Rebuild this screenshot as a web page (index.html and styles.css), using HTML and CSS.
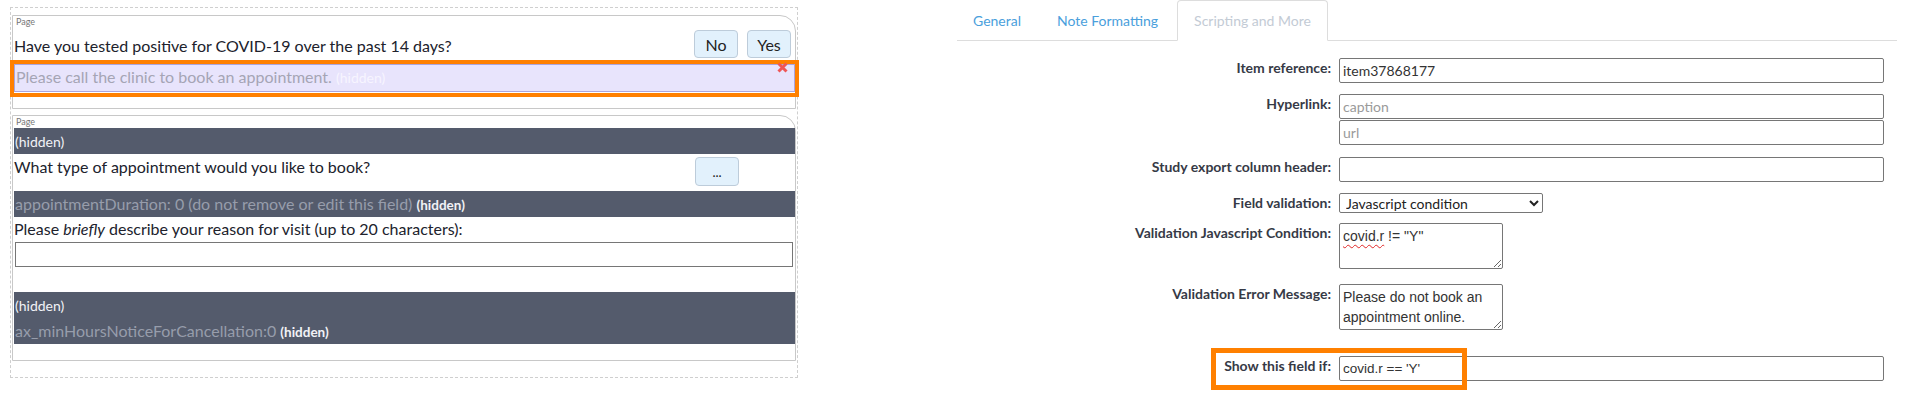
FILE: index.html
```html
<!DOCTYPE html>
<html lang="en">
<head>
<meta charset="utf-8">
<title>Item properties</title>
<link rel="stylesheet" href="styles.css">
</head>
<body>
<div class="designer">
  <div class="page page-1">
    <div class="page-label">Page</div>
    <div class="qrow">
      <div class="qtext q1">Have you tested positive for COVID-19 over the past 14 days?</div>
      <div class="choices">
        <button class="choice" type="button">No</button>
        <button class="choice" type="button">Yes</button>
      </div>
    </div>
    <div class="note-row">
      <span class="note-text">Please call the clinic to book an appointment.</span> <span class="note-hidden">(hidden)</span>
      <span class="sel-frame"></span>
      <svg class="del-x" width="11" height="11" viewBox="0 0 11 11"><path d="M1.5 1.5 L9.5 9.5 M9.5 1.5 L1.5 9.5" stroke="#ef5656" stroke-width="3" stroke-linecap="butt"/></svg>
    </div>
  </div>
  <div class="page page-2">
    <div class="page-label">Page</div>
    <div class="hidden-bar"><span class="tag-plain">(hidden)</span></div>
    <div class="qrow2">
      <div class="qtext">What type of appointment would you like to book?</div>
      <button class="choice more" type="button">...</button>
    </div>
    <div class="hidden-bar"><span class="var">appointmentDuration: 0 (do not remove or edit this field)</span> <span class="tag-bold">(hidden)</span></div>
    <div class="qtext q3">Please <em>briefly</em> describe your reason for visit (up to 20 characters):</div>
    <input class="answer" type="text">
    <div class="hidden-bar tall">
      <div class="bar-line"><span class="tag-plain">(hidden)</span></div>
      <div class="bar-line"><span class="var">ax_minHoursNoticeForCancellation:0</span> <span class="tag-bold">(hidden)</span></div>
    </div>
  </div>
</div>

<div class="props">
  <ul class="tabs">
    <li class="tab">General</li>
    <li class="tab">Note Formatting</li>
    <li class="tab active">Scripting and More</li>
  </ul>
  <div class="form">
    <div class="frow">
      <label class="flabel">Item reference:</label>
      <input class="finput" type="text" value="item37868177">
    </div>
    <div class="frow mt11">
      <label class="flabel">Hyperlink:</label>
      <div class="fstack">
        <input class="finput" type="text" placeholder="caption">
        <input class="finput url" type="text" placeholder="url">
      </div>
    </div>
    <div class="frow mt12">
      <label class="flabel">Study export column header:</label>
      <input class="finput" type="text">
    </div>
    <div class="frow mt11">
      <label class="flabel">Field validation:</label>
      <select class="fselect"><option>Javascript condition</option></select>
    </div>
    <div class="frow mt10">
      <label class="flabel">Validation Javascript Condition:</label>
      <div class="farea"><span class="misspelled">covid.r</span> != "Y"</div>
    </div>
    <div class="frow mt15">
      <label class="flabel">Validation Error Message:</label>
      <div class="farea">Please do not book an appointment online.</div>
    </div>
    <div class="frow mt26">
      <label class="flabel">Show this field if:</label>
      <input class="finput show" type="text" value="covid.r == 'Y'">
      <span class="show-frame"></span>
    </div>
  </div>
</div>
</body>
</html>
```

FILE: styles.css
```css
* {
  box-sizing: border-box;
}

html {
  background: #fff;
}

body {
  margin: 0;
  min-height: 412px;
  display: flex;
  align-items: flex-start;
  font-family: Lato, "Liberation Sans", sans-serif;
  color: #222;
  background: #fff;
}

/* ---------- left: form designer ---------- */
.designer {
  flex: none;
  margin: 7px 0 0 10px;
  width: 788px;
  height: 371px;
  border: 1px dashed #cfcfcf;
  padding: 7px 0 0 1px;
}

.page {
  width: 784px;
  border: 1px solid #c8c8c8;
  border-top-right-radius: 16px;
  padding: 0 0 0 1px;
  background: #fff;
}

.page-1 {
  height: 94px;
}

.page-2 {
  height: 246px;
  margin-top: 6px;
}

.page-label {
  height: 12px;
  font-size: 9px;
  line-height: 12px;
  color: #777;
  padding-left: 2px;
}

.qtext {
  font-size: 16px;
  line-height: 20px;
  color: #20222c;
}

.qrow {
  display: flex;
  align-items: center;
  justify-content: space-between;
  height: 30px;
  padding: 2px 4px 0 0;
}

.q1 {
  padding-top: 4px;
}

.choices {
  display: flex;
  gap: 9px;
}

.choice {
  width: 44px;
  height: 28px;
  padding: 0;
  border: 1px solid #bdccda;
  border-radius: 4px;
  background: #e2f1fc;
  font-family: Lato, sans-serif;
  font-size: 16px;
  color: #222;
}

.note-row {
  position: relative;
  margin-top: 6px;
  height: 28px;
  border: 1px solid #aaa5dd;
  background: #e8e4fc;
  padding-left: 1px;
  font-size: 16px;
  line-height: 24px;
}

.note-text {
  color: #a5a5b5;
}

.note-hidden {
  font-size: 14px;
  color: #f7f5ff;
}

.sel-frame {
  position: absolute;
  left: -5px;
  right: -5px;
  top: -5px;
  bottom: -6px;
  border: 4px solid #ff8000;
  pointer-events: none;
}

.del-x {
  position: absolute;
  top: -3px;
  right: 6px;
}

.hidden-bar {
  height: 26px;
  background: #545b6c;
  padding-left: 1px;
  font-size: 16px;
  line-height: 26px;
}

.hidden-bar.tall {
  height: 52px;
  margin-top: 25px;
}

.bar-line {
  height: 26px;
}

.tag-plain {
  font-size: 14px;
  color: #f1f2f6;
}

.tag-bold {
  font-size: 13.5px;
  font-weight: 700;
  color: #f1f2f6;
}

.var {
  color: #979dab;
}

.qrow2 {
  display: flex;
  align-items: flex-start;
  justify-content: space-between;
  height: 37px;
  padding: 3px 4px 0 0;
}

.more {
  height: 29px;
  margin-right: 52px;
  font-size: 13px;
  line-height: 20px;
}

.q3 {
  padding-top: 2px;
}

.q3 em {
  font-style: italic;
}

.answer {
  display: block;
  margin: 3px 2px 0 1px;
  width: 778px;
  height: 25px;
  border: 1px solid #767676;
  border-radius: 0;
  background: #fff;
}

/* ---------- right: properties ---------- */
.props {
  flex: none;
  margin-left: 159px;
  width: 940px;
}

.tabs {
  display: flex;
  list-style: none;
  margin: 0;
  padding: 0;
  height: 41px;
  border-bottom: 1px solid #dddddd;
}

.tab {
  height: 41px;
  margin-right: 2px;
  padding: 10px 16px 9px;
  border: 1px solid transparent;
  border-radius: 4px 4px 0 0;
  font-size: 14px;
  line-height: 20px;
  color: #4aa0dc;
}

.tab:first-child {
  padding-left: 15px;
}

.tab.active {
  border-color: #dddddd #dddddd #fff;
  background: #fff;
  color: #c3cbd5;
}

.form {
  padding-top: 17px;
}

.frow {
  position: relative;
  display: grid;
  grid-template-columns: 374px 545px;
  column-gap: 8px;
  align-items: start;
}

.mt10 { margin-top: 10px; }
.mt11 { margin-top: 11px; }
.mt12 { margin-top: 12px; }
.mt15 { margin-top: 15px; }
.mt26 { margin-top: 26px; }

.flabel {
  text-align: right;
  font-size: 14px;
  font-weight: 700;
  line-height: 20px;
  color: #363a46;
}

.fstack {
  display: flex;
  flex-direction: column;
}

.finput {
  display: block;
  width: 545px;
  height: 25px;
  border: 1px solid #767676;
  border-radius: 2px;
  padding: 0 3px;
  font-family: Lato, sans-serif;
  font-size: 14px;
  color: #333;
  background: #fff;
}

.finput::placeholder {
  color: #9a9a9a;
}

.finput.url {
  margin-top: 1px;
}

.finput.show {
  font-family: "Liberation Sans", Arial, sans-serif;
  font-size: 13.5px;
}

.fselect {
  display: block;
  width: 204px;
  height: 20px;
  border: 1px solid #767676;
  border-radius: 2px;
  padding: 0 0 0 2px;
  font-family: Lato, sans-serif;
  font-size: 14px;
  color: #222;
  background: #fff;
}

.farea {
  width: 164px;
  height: 46px;
  border: 1px solid #767676;
  border-radius: 2px;
  padding: 2px 3px;
  font-family: "Liberation Sans", Arial, sans-serif;
  font-size: 14px;
  line-height: 20px;
  color: #333;
  overflow: auto;
  resize: both;
}

.misspelled {
  text-decoration: underline wavy #e02828;
  text-decoration-thickness: 1px;
  text-underline-offset: 3px;
}

.show-frame {
  position: absolute;
  left: 254px;
  top: -8px;
  width: 256px;
  height: 42px;
  border: 5px solid #ff8000;
  pointer-events: none;
}
```
